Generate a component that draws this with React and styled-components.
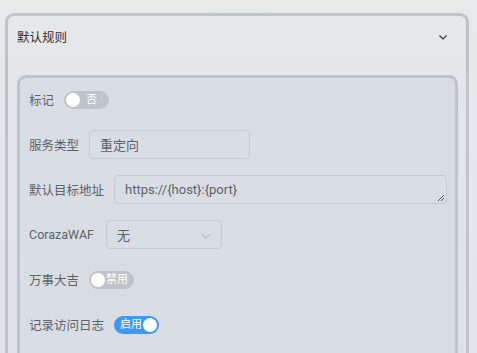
import React from 'react'
import styled, { createGlobalStyle } from 'styled-components'

const GlobalStyle = createGlobalStyle`
  html, body {
    margin: 0;
    padding: 0;
    background: #e6e8eb;
    font-family: Roboto, "Noto Sans CJK SC", sans-serif;
  }
`

const Page = styled.div`
  width: 477px;
  height: 353px;
  overflow: hidden;
  box-sizing: border-box;
  padding: 13px 8px 0 5px;
  background:
    radial-gradient(ellipse 120px 30px at 240px 38px, rgba(214, 222, 234, 0.7), transparent),
    linear-gradient(180deg, #e8e9eb 0%, #e2e5e9 100%);
`

const Card = styled.div`
  border: 3px solid #bfc3cb;
  border-radius: 9px;
  background: linear-gradient(180deg, #e7e8ea 0%, #e3e6ea 20%, #dde1e7 100%);
  padding: 0 8px 0 9px;
  height: 400px;
`

const CardHeader = styled.div`
  display: flex;
  align-items: center;
  justify-content: space-between;
  height: 40px;
  margin-bottom: 19px;
  font-size: 12.5px;
  color: #303133;
`

const Chevron = styled.svg`
  width: 10px;
  height: 10px;
  margin-right: ${({ $light }) => ($light ? 0 : 10)}px;
  margin-top: 2px;
  color: ${({ $light }) => ($light ? '#b8bdc6' : '#303133')};
`

const InnerCard = styled.div`
  border: 3px solid #bfc3cb;
  border-radius: 9px;
  background: #d9dee5;
  padding: 7px 8px 0 9px;
  display: flex;
  flex-direction: column;
  gap: 16px;
  height: 320px;
`

const Row = styled.div`
  display: flex;
  align-items: center;
  height: 29px;
`

const Label = styled.span`
  font-size: 12.5px;
  color: #606266;
  margin-right: ${({ $gap }) => $gap || 10}px;
  white-space: nowrap;
`

const Box = styled.div`
  box-sizing: border-box;
  height: 29px;
  width: ${({ $w }) => ($w ? `${$w}px` : 'auto')};
  flex: ${({ $grow }) => ($grow ? 1 : 'none')};
  border: 1px solid #c6cbd3;
  border-radius: 4px;
  display: flex;
  align-items: center;
  justify-content: space-between;
  padding: 0 10px 0 10px;
  font-size: 13px;
  color: #606266;
  position: relative;
`

const Resize = styled.svg`
  position: absolute;
  right: 1px;
  bottom: 1px;
  width: 8px;
  height: 8px;
`

const Switch = styled.div`
  box-sizing: border-box;
  width: 45px;
  height: 18px;
  border-radius: 9px;
  background: ${({ $on }) => ($on ? '#3f97f6' : '#bfc3ca')};
  display: flex;
  flex-direction: ${({ $on }) => ($on ? 'row-reverse' : 'row')};
  align-items: center;
  padding: 0 2px;
  gap: ${({ $tight }) => ($tight ? 1 : 6)}px;
`

const Knob = styled.span`
  width: 14px;
  height: 14px;
  border-radius: 50%;
  background: #fff;
  flex: none;
`

const SwitchText = styled.span`
  font-size: 11px;
  color: #fff;
  line-height: 1;
`

const ChevronIcon = ({ light }) => (
  <Chevron $light={light} viewBox="0 0 10 10">
    <path d="M1.5 3.5 L5 7 L8.5 3.5" fill="none" stroke="currentColor" strokeWidth="1.1" />
  </Chevron>
)

export default function App() {
  return (
    <>
      <GlobalStyle />
      <Page>
        <Card>
          <CardHeader>
            <span>默认规则</span>
            <ChevronIcon />
          </CardHeader>
          <InnerCard>
            <Row>
              <Label>标记</Label>
              <Switch>
                <Knob />
                <SwitchText>否</SwitchText>
              </Switch>
            </Row>
            <Row>
              <Label>服务类型</Label>
              <Box $w={161}>重定向</Box>
            </Row>
            <Row>
              <Label>默认目标地址</Label>
              <Box $grow>
                https://{'{host}'}:{'{port}'}
                <Resize viewBox="0 0 8 8">
                  <path d="M7 1 L1 7 M7 4 L4 7" stroke="#303133" strokeWidth="0.8" />
                </Resize>
              </Box>
            </Row>
            <Row>
              <Label $gap={12}>CorazaWAF</Label>
              <Box $w={116}>
                无
                <ChevronIcon light />
              </Box>
            </Row>
            <Row>
              <Label>万事大吉</Label>
              <Switch $tight>
                <Knob />
                <SwitchText>禁用</SwitchText>
              </Switch>
            </Row>
            <Row>
              <Label>记录访问日志</Label>
              <Switch $on $tight>
                <Knob />
                <SwitchText>启用</SwitchText>
              </Switch>
            </Row>
          </InnerCard>
        </Card>
      </Page>
    </>
  )
}
